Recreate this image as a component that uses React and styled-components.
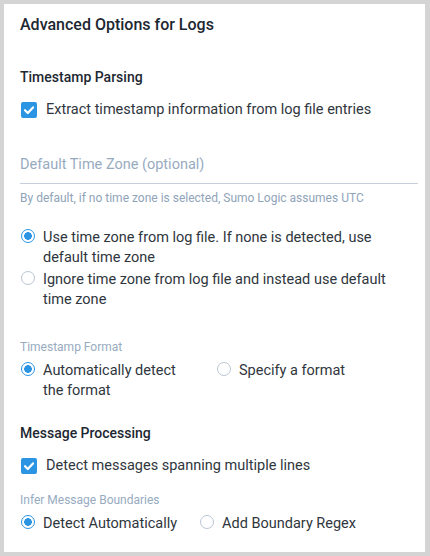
import styled, { createGlobalStyle } from "styled-components";

const GlobalStyle = createGlobalStyle`
  html, body {
    margin: 0;
    padding: 0;
    background: #d4d4d4;
  }
  * {
    box-sizing: border-box;
  }
`;

export default function App() {
  return (
    <>
      <GlobalStyle />
      <Panel>
        <Title>Advanced Options for Logs</Title>

        <SectionHeading>Timestamp Parsing</SectionHeading>
        <CheckRow>
          <CheckBox checked />
          <span>Extract timestamp information from log file entries</span>
        </CheckRow>

        <Field>
          <Placeholder>Default Time Zone (optional)</Placeholder>
        </Field>
        <Helper>By default, if no time zone is selected, Sumo Logic assumes UTC</Helper>

        <RadioStack>
          <RadioOption>
            <Radio checked />
            <span>Use time zone from log file. If none is detected, use default time zone</span>
          </RadioOption>
          <RadioOption>
            <Radio />
            <span>Ignore time zone from log file and instead use default time zone</span>
          </RadioOption>
        </RadioStack>

        <FieldLabel>Timestamp Format</FieldLabel>
        <RadioRow>
          <RadioOption $width="196px">
            <Radio checked />
            <span>Automatically detect the format</span>
          </RadioOption>
          <RadioOption>
            <Radio />
            <span>Specify a format</span>
          </RadioOption>
        </RadioRow>

        <SectionHeading $top="22px">Message Processing</SectionHeading>
        <CheckRow>
          <CheckBox checked />
          <span>Detect messages spanning multiple lines</span>
        </CheckRow>

        <FieldLabel $top="16px">Infer Message Boundaries</FieldLabel>
        <RadioRow>
          <RadioOption $gap="22px">
            <Radio checked />
            <span>Detect Automatically</span>
          </RadioOption>
          <RadioOption>
            <Radio />
            <span>Add Boundary Regex</span>
          </RadioOption>
        </RadioRow>
      </Panel>
    </>
  );
}

function CheckBox({ checked }) {
  return (
    <Box $checked={checked}>
      {checked && (
        <svg width="12" height="12" viewBox="0 0 12 12">
          <path d="M2 6.2 L4.8 9 L10 3.4" fill="none" stroke="#fff" strokeWidth="2.2" strokeLinecap="round" strokeLinejoin="round" />
        </svg>
      )}
    </Box>
  );
}

function Radio({ checked }) {
  return <Circle $checked={checked} />;
}

const Panel = styled.div`
  width: 430px;
  height: 556px;
  background: #fff;
  border: 4px solid #d4d4d4;
  border-right-width: 5px;
  padding: 11px 7px 0 16px;
  font-family: Roboto, "Liberation Sans", sans-serif;
  color: #2f363d;
`;

const Title = styled.h1`
  margin: 0;
  font-size: 16px;
  line-height: 20px;
  font-weight: 500;
  color: #1d2731;
`;

const SectionHeading = styled.h2`
  margin: ${(p) => p.$top || "32px"} 0 0;
  font-size: 14px;
  line-height: 20px;
  font-weight: 500;
  color: #1d2731;
`;

const CheckRow = styled.label`
  display: flex;
  align-items: center;
  gap: 9px;
  margin-top: 13px;
  padding-left: 1px;
  font-size: 14.5px;
  line-height: 20px;
`;

const Box = styled.span`
  flex: none;
  width: 16px;
  height: 16px;
  border-radius: 2px;
  display: flex;
  align-items: center;
  justify-content: center;
  background: ${(p) => (p.$checked ? "#2b95e3" : "#fff")};
  border: ${(p) => (p.$checked ? "none" : "1px solid #b7c4d1")};
`;

const Field = styled.div`
  margin-top: 35px;
  padding-bottom: 8px;
  border-bottom: 1px solid #c6d0da;
`;

const Placeholder = styled.div`
  font-size: 14.5px;
  line-height: 20px;
  color: #97abbf;
`;

const Helper = styled.div`
  margin-top: 6px;
  font-size: 12px;
  line-height: 16px;
  color: #8fa4b9;
`;

const RadioStack = styled.div`
  display: flex;
  flex-direction: column;
  gap: 2px;
  margin-top: 22px;
  padding-right: 24px;
`;

const RadioRow = styled.div`
  display: flex;
  align-items: flex-start;
  margin-top: 6px;
`;

const RadioOption = styled.label`
  display: flex;
  align-items: flex-start;
  gap: 8px;
  padding-left: 1px;
  width: ${(p) => p.$width || "auto"};
  margin-right: ${(p) => p.$gap || "0"};
  font-size: 14.5px;
  line-height: 20px;
  padding-right: ${(p) => (p.$width ? "20px" : "0")};
`;

const Circle = styled.span`
  flex: none;
  width: 14px;
  height: 14px;
  margin-top: 1px;
  border-radius: 50%;
  border: 1.5px solid ${(p) => (p.$checked ? "#2b95e3" : "#b9c6d3")};
  background: ${(p) =>
    p.$checked ? "radial-gradient(circle, #2b95e3 0 3.6px, #fff 4px)" : "#fff"};
`;

const FieldLabel = styled.div`
  margin-top: ${(p) => p.$top || "29px"};
  font-size: 12px;
  line-height: 16px;
  color: #97abbf;
`;
